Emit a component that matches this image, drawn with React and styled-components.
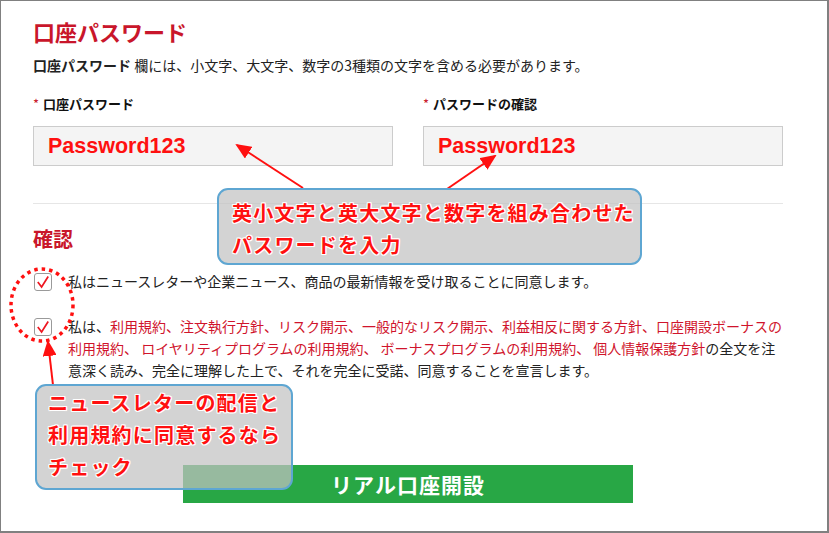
import styled, { createGlobalStyle } from "styled-components";

const GlobalStyle = createGlobalStyle`
  body {
    margin: 0;
    background: #fff;
    font-family: "Noto Sans CJK JP", "Noto Sans", sans-serif;
    color: #222;
  }
`;

const App = () => {
  return (
    <>
      <GlobalStyle />
      <Frame>
        <Content>
          <Title>口座パスワード</Title>
          <Description>
            <strong>口座パスワード</strong> 欄には、小文字、大文字、数字の3種類の文字を含める必要があります。
          </Description>
          <FieldRow>
            <Field>
              <Label>
                <Required>*</Required>口座パスワード
              </Label>
              <Input>Password123</Input>
            </Field>
            <Field>
              <Label>
                <Required>*</Required>パスワードの確認
              </Label>
              <Input>Password123</Input>
            </Field>
          </FieldRow>
          <Divider />
          <SubTitle>確認</SubTitle>
          <CheckRow>
            <CheckBox>
              <CheckMark />
            </CheckBox>
            <CheckText>私はニュースレターや企業ニュース、商品の最新情報を受け取ることに同意します。</CheckText>
          </CheckRow>
          <CheckRow $gap={23}>
            <CheckBox>
              <CheckMark />
            </CheckBox>
            <CheckText>
              私は、<Link>利用規約、注文執行方針、リスク開示、一般的なリスク開示、利益相反に関する方針、口座開設ボーナスの<br />利用規約、 ロイヤリティプログラムの利用規約、 ボーナスプログラムの利用規約、 個人情報保護方針</Link>の全文を注<br />
              意深く読み、完全に理解した上で、それを完全に受諾、同意することを宣言します。
            </CheckText>
          </CheckRow>
          <SubmitButton>リアル口座開設</SubmitButton>
        </Content>

        <Annotations viewBox="0 0 829 533">
          <defs>
            <marker id="head" markerWidth="8" markerHeight="7" refX="7" refY="3.5" orient="auto" markerUnits="strokeWidth">
              <path d="M0,0 L8,3.5 L0,7 Z" fill="#ff1010" />
            </marker>
          </defs>
          <line x1="303" y1="188" x2="237" y2="145" stroke="#ff1010" strokeWidth="2" markerEnd="url(#head)" />
          <line x1="447" y1="189" x2="495" y2="156" stroke="#ff1010" strokeWidth="2" markerEnd="url(#head)" />
          <line x1="53" y1="385" x2="48" y2="342" stroke="#ff1010" strokeWidth="2" markerEnd="url(#head)" />
          <ellipse cx="42" cy="305" rx="31" ry="36" fill="none" stroke="#ff1010" strokeWidth="3.5" strokeDasharray="3.5 4" />
        </Annotations>

        <Callout $left={217} $top={188} $width={425} $height={77} $pt={7} $pl={13}>
          英小文字と英大文字と数字を組み合わせた<br />パスワードを入力
        </Callout>
        <Callout $left={35} $top={384} $width={258} $height={106} $pt={1} $pl={11}>
          ニュースレターの配信と<br />利用規約に同意するなら<br />チェック
        </Callout>
      </Frame>
    </>
  );
};

export default App;

const CheckMark = () => (
  <svg width="14" height="14" viewBox="0 0 14 14">
    <path d="M1.8 7 L5.6 12 L12.2 1.5" fill="none" stroke="#ee1620" strokeWidth="1.7" />
  </svg>
);

const Frame = styled.div`
  position: relative;
  box-sizing: border-box;
  width: 829px;
  height: 533px;
  border: solid #808080;
  border-width: 1px 2px 2px 1px;
  overflow: hidden;
  background: #fff;
`;

const Content = styled.div`
  padding: 15px 44px 0 32px;
  display: flex;
  flex-direction: column;
`;

const Title = styled.h2`
  margin: 0;
  font-size: 22px;
  line-height: 30px;
  font-weight: 700;
  color: #c9162b;
`;

const Description = styled.p`
  margin: 9px 0 0;
  font-size: 14px;
  line-height: 20px;

  strong {
    font-weight: 700;
  }
`;

const FieldRow = styled.div`
  display: grid;
  grid-template-columns: 360px 360px;
  gap: 30px;
  margin-top: 19px;
`;

const Field = styled.div`
  display: flex;
  flex-direction: column;
  gap: 12px;
`;

const Label = styled.label`
  font-size: 13px;
  line-height: 20px;
  font-weight: 700;
  color: #111;
`;

const Required = styled.span`
  color: #c9162b;
  font-weight: 400;
  margin-right: 4px;
`;

const Input = styled.div`
  box-sizing: border-box;
  height: 40px;
  padding: 0 14px;
  display: flex;
  align-items: center;
  background: #f4f4f4;
  border: 1px solid #cccccc;
  font-family: "Liberation Sans", Arial, sans-serif;
  font-size: 21.5px;
  font-weight: 700;
  color: #ff1010;
`;

const Divider = styled.hr`
  margin: 37px 0 0;
  border: none;
  border-top: 1px solid #e6e6e6;
  height: 0;
`;

const SubTitle = styled.h3`
  margin: 20px 0 0;
  font-size: 20px;
  line-height: 30px;
  font-weight: 700;
  color: #c9162b;
`;

const CheckRow = styled.div`
  display: flex;
  align-items: flex-start;
  gap: 16px;
  margin-top: ${(p) => p.$gap ?? 16}px;
  padding-left: 1px;
`;

const CheckBox = styled.span`
  box-sizing: border-box;
  flex: none;
  width: 18px;
  height: 18px;
  margin-top: 3px;
  border: 1px solid #9a9a9a;
  border-radius: 3px;
  background: #fff;
  display: flex;
  align-items: center;
  justify-content: center;
`;

const CheckText = styled.p`
  margin: 0;
  width: 720px;
  font-size: 14px;
  line-height: 22px;
  color: #222;
`;

const Link = styled.span`
  color: #d0142c;
`;

const SubmitButton = styled.button`
  align-self: center;
  margin-top: 84px;
  width: 450px;
  height: 38px;
  border: none;
  background: #28a745;
  color: #fff;
  font-family: "Noto Sans CJK JP", sans-serif;
  font-size: 21px;
  font-weight: 700;
  letter-spacing: 1px;
`;

const Annotations = styled.svg`
  position: absolute;
  left: -1px;
  top: -1px;
  width: 829px;
  height: 533px;
  pointer-events: none;
`;

const Callout = styled.div`
  position: absolute;
  left: ${(p) => p.$left - 1}px;
  top: ${(p) => p.$top - 1}px;
  width: ${(p) => p.$width}px;
  height: ${(p) => p.$height}px;
  box-sizing: border-box;
  padding: ${(p) => p.$pt}px 0 0 ${(p) => p.$pl}px;
  background: rgba(194, 194, 194, 0.72);
  border: 2px solid #5ea6d2;
  border-radius: 11px;
  color: #ff1010;
  font-size: 20px;
  line-height: 32px;
  font-weight: 700;
  letter-spacing: 1.2px;
  white-space: nowrap;
  text-shadow:
    1px 0 0 #fff, -1px 0 0 #fff, 0 1px 0 #fff, 0 -1px 0 #fff,
    1px 1px 0 #fff, -1px -1px 0 #fff, 1px -1px 0 #fff, -1px 1px 0 #fff;
`;
